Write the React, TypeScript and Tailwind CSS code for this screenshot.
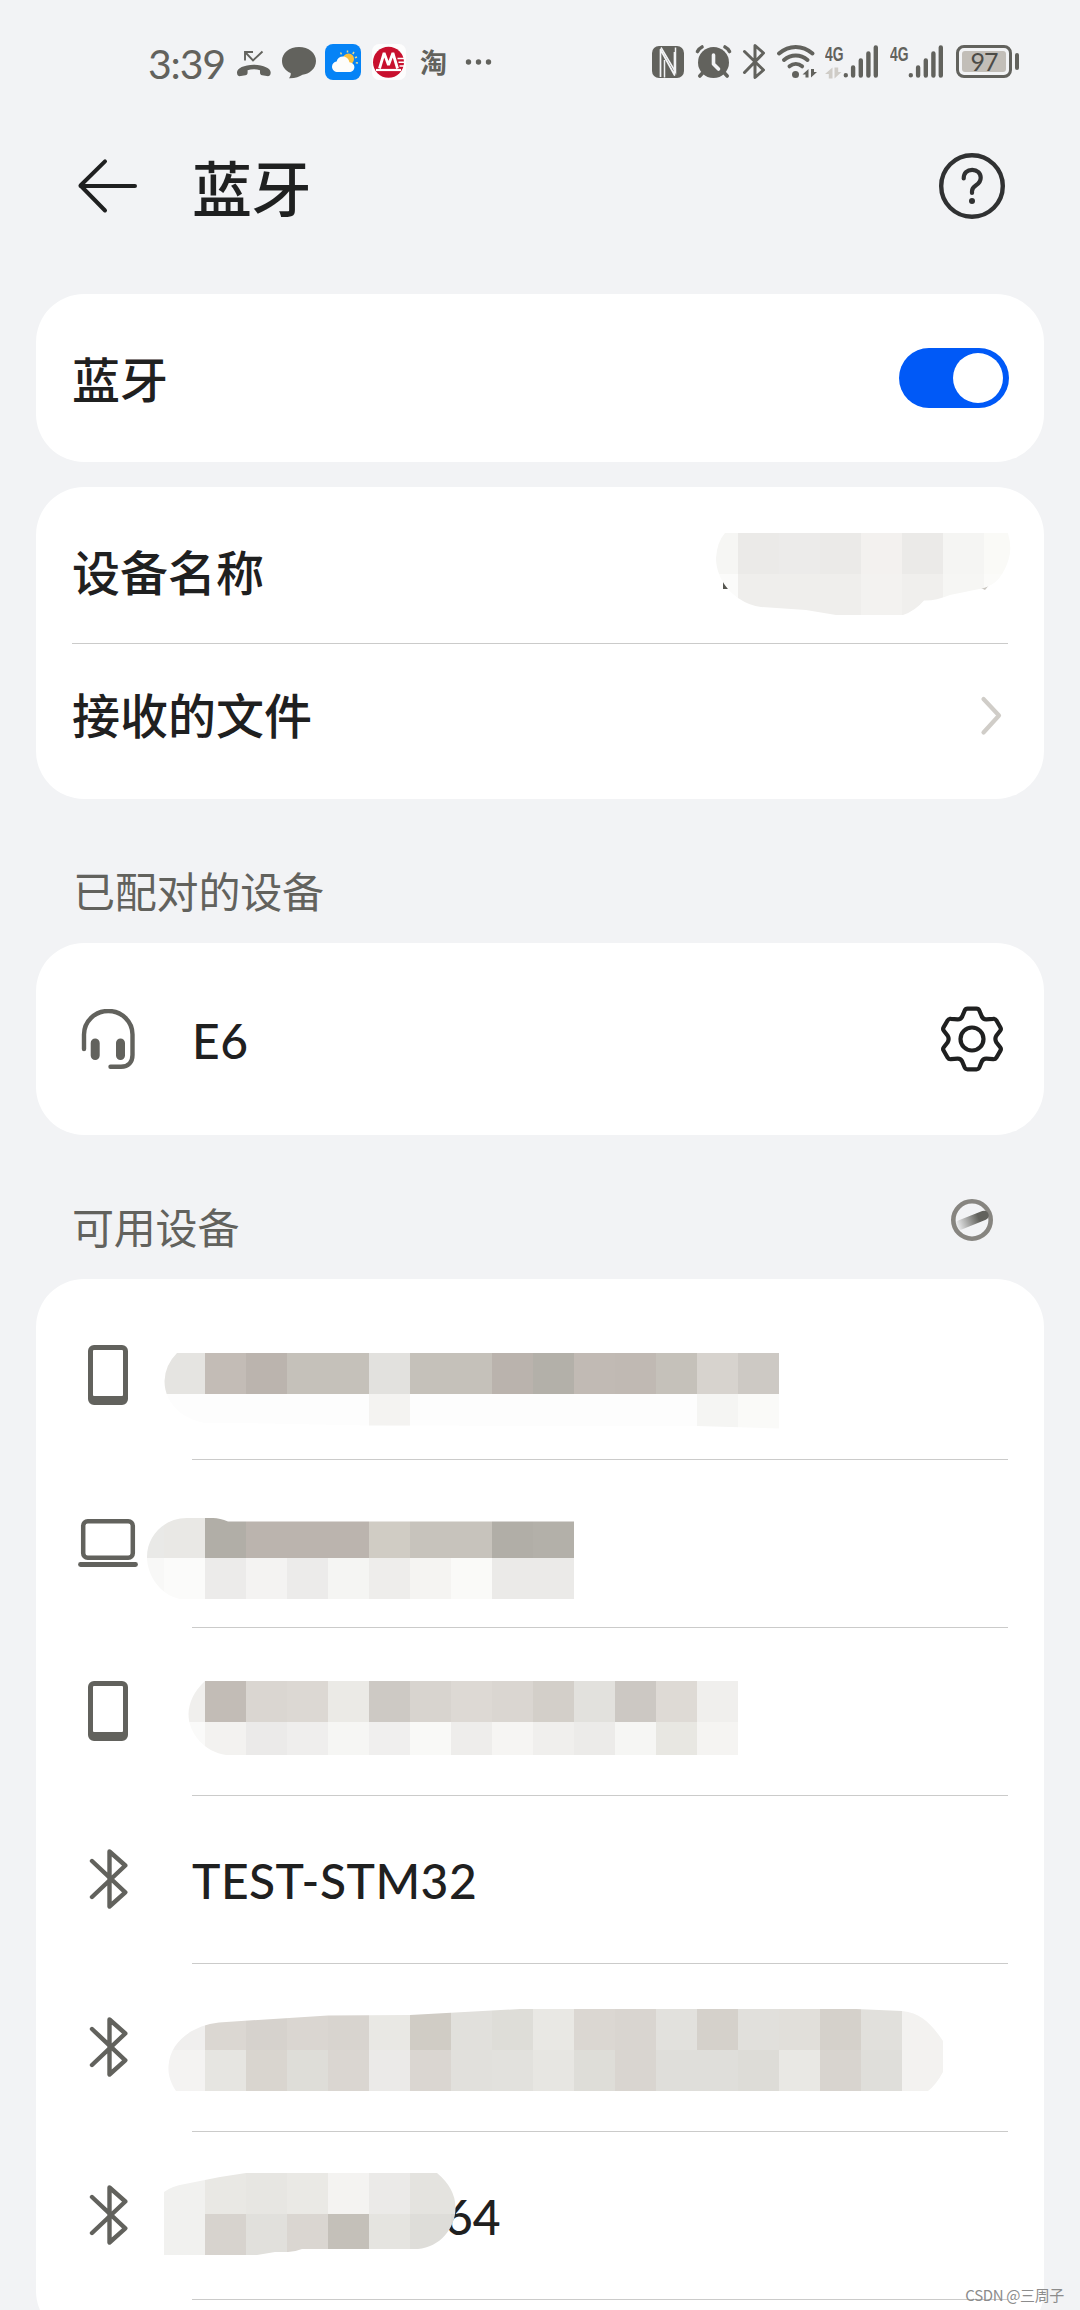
import React, { useState } from "react";

const MUTED = "#62625d";
const INK = "#1f2020";
const CELL = 41;

/* ---------- status bar ---------- */

const StatusIcon = (props: { x: number; w: number; className?: string; children: React.ReactNode }) => (
    <svg
        className={"shrink-0 " + (props.className || "")}
        width={props.w}
        height={44}
        viewBox={`${props.x} 40 ${props.w} 44`}
        fill="none"
    >
        {props.children}
    </svg>
);

// growing signal bars, starting at x
const SignalBars = ({ x }: { x: number }) => (
    <g stroke={MUTED} strokeWidth="4.4" strokeLinecap="round">
        <path d={`M${x} 75.2v.1M${x + 7.3} 67.5v8M${x + 15} 60.5v15M${x + 22.6} 53.5v22M${x + 30} 47.5v28`} />
    </g>
);

const NetworkLabel = () => (
    <div className="mt-[2px] h-[22px] origin-left scale-x-[0.66] whitespace-nowrap font-['Liberation_Sans',sans-serif] text-[21px] font-bold leading-[23px] text-[#62625d]">
        4G
    </div>
);

const StatusBar = () => (
    <div className="flex h-[124px] w-full items-start pt-[40px] pl-[148px]">
        <div className="h-[44px] w-[85px] text-[41px] leading-[47px] tracking-[-1.2px] text-[#62625d]">3:39</div>
        {/* missed call */}
        <StatusIcon x={235} w={38} className="ml-[2px]">
            <path
                d="M237 72.500c0-4 7-7.700 16.800-7.700s16.900 3.700 16.900 7.700c0 3-1.500 4-4 3.600l-4.500-.8c-1.700-.4-2.200-1.300-2.200-2.800v-2.300c-3.800-1.200-8.600-1.200-12.400 0v2.300c0 1.500-.5 2.400-2.200 2.800l-4.500.8c-2.500.4-3.900-.6-3.900-3.600z"
                fill={MUTED}
            />
            <path d="M245 60.500V52h8M245.500 52.500l7.500 8L262.500 51.500" stroke={MUTED} strokeWidth="1.900" />
        </StatusIcon>
        {/* message */}
        <StatusIcon x={281} w={36} className="ml-[8px]">
            <path
                d="M299 47c9.600 0 17 6 17 14s-7 13-13.500 13.800c-3 2-7.500 3.700-13.500 3.500 1.300-1.600 2-3.600 1.700-5.300C285.500 71 282 66.500 282 61c0-8 7.400-14 17-14z"
                fill={MUTED}
            />
        </StatusIcon>
        {/* weather */}
        <StatusIcon x={325} w={36} className="ml-[8px]">
            <rect x="325" y="44" width="36" height="36" rx="8" fill="#0583f6" />
            <path
                d="M347.500 50.500v2M354 52l-1.200 2M340.500 52.500l1 1.800M357 57l-2 .8M358 63l-2.200-.2"
                stroke="#e8d98c"
                strokeWidth="1.500"
            />
            <circle cx="348.500" cy="59" r="5.500" fill="#fac03d" />
            <path
                d="M338 72c-3.500 0-6-2.300-6-5.300 0-2.700 2-4.900 4.600-5.200.9-3 3.300-4.900 6.200-4.900 3.500 0 6 2.300 6.600 5.600 2.900.2 5 2.100 5 4.800 0 3-2.300 5-5.400 5z"
                fill="#fdfdfb"
            />
        </StatusIcon>
        {/* bank */}
        <StatusIcon x={371} w={36} className="ml-[10px]">
            <rect x="372" y="44" width="34" height="36" rx="7" fill="#fdfdfd" />
            <circle cx="388.500" cy="62.300" r="15.500" fill="#c8102e" />
            <path d="M379.500 68.500l4.600-15.500 4.400 12 4.400-12 4.600 15.500" stroke="#fff" strokeWidth="2.800" strokeLinejoin="bevel" />
            <path d="M376 70h25" stroke="#fff" strokeWidth="2.200" />
            <path d="M397.500 58.500h7M398.500 62.300h7M399.500 66h6" stroke="#fff" strokeWidth="1.400" />
        </StatusIcon>
        <div className="ml-[13px] h-[44px] w-[27px] text-[27px] font-bold leading-[45px] text-[#62625d]">淘</div>
        <StatusIcon x={465} w={32} className="ml-[18px]">
            <g fill={MUTED}>
                <circle cx="468.500" cy="62" r="2.700" />
                <circle cx="478.500" cy="62" r="2.700" />
                <circle cx="488.500" cy="62" r="2.700" />
            </g>
        </StatusIcon>

        {/* nfc */}
        <StatusIcon x={652} w={32} className="ml-[155px]">
            <rect x="652" y="46" width="32" height="32" rx="7" fill={MUTED} />
            <path d="M660.500 77V49.500L674.500 75V52" stroke="#f2f3f5" strokeWidth="1.700" strokeLinejoin="round" />
            <path d="M661 47.500L675.500 72V47.500M664.500 77.500V60" stroke="#f2f3f5" strokeWidth="1.500" />
        </StatusIcon>
        {/* alarm */}
        <StatusIcon x={695} w={37} className="ml-[11px]">
            <circle cx="713.500" cy="62.500" r="15.500" fill={MUTED} />
            <path d="M713.500 55v9l5 5" stroke="#f2f3f5" strokeWidth="3.600" strokeLinecap="round" strokeLinejoin="round" />
            <path
                d="M697.500 51.500q1.500-3 4.500-4.500M729.500 51.500q-1.500-3-4.500-4.500M703 72.500l-3.200 3.500M724 72.500l3.200 3.500"
                stroke={MUTED}
                strokeWidth="3.600"
                strokeLinecap="round"
            />
        </StatusIcon>
        {/* bluetooth */}
        <StatusIcon x={741} w={26} className="ml-[9px]">
            <path
                d="M744.500 51.500l19 18.500-8.500 7.500V45.500l8.500 7.500-19 19.500"
                stroke={MUTED}
                strokeWidth="3"
                strokeLinecap="round"
                strokeLinejoin="round"
            />
        </StatusIcon>
        {/* wifi */}
        <StatusIcon x={776} w={41} className="ml-[9px]">
            <g stroke={MUTED} strokeWidth="4" strokeLinecap="round">
                <path d="M779 53.500c10-8.800 23.500-8.800 33.500 0" />
                <path d="M784 60c7-6 16.500-6 23.500 0" />
                <path d="M789.500 66.300c3.800-3 8.800-3 12.600 0" />
            </g>
            <circle cx="795.500" cy="74.500" r="3.500" fill={MUTED} />
            <path d="M808.500 77.500v-8.500l-6 5.500h3v3zM811 69v8.500l6-5.500h-3v-3z" fill={MUTED} />
        </StatusIcon>
        <div className="ml-[8px] flex h-[44px] w-[19px] flex-col">
            <NetworkLabel />
            <svg width="17" height="12" viewBox="0 0 17 12" className="mt-[3px]">
                <path d="M7.500 11.500V.5L0 7h3.800v4.500zM9.500.5v11L16.500 5h-3.300V.5z" fill="#cfccc7" />
            </svg>
        </div>
        <StatusIcon x={843} w={37} className="-ml-px">
            <SignalBars x={845.8} />
        </StatusIcon>
        <div className="ml-[10px] flex h-[44px] w-[19px] flex-col">
            <NetworkLabel />
        </div>
        <StatusIcon x={908} w={37} className="-ml-px">
            <SignalBars x={910.8} />
        </StatusIcon>
        {/* battery */}
        <div className="ml-[11px] mt-[5px] flex items-center gap-[3px]">
            <div className="flex h-[33px] w-[56px] items-center justify-center rounded-[8px] border-[3.500px] border-[#62625d]">
                <div className="flex h-[21px] w-[44px] items-center justify-center rounded-[3px] bg-[#c2beb8] text-[25px] leading-none tracking-[-1px] text-[#4b4b47]">
                    97
                </div>
            </div>
            <div className="h-[17px] w-[4px] rounded-full bg-[#62625d]" />
        </div>
    </div>
);

/* ---------- icons ---------- */

const PhoneIcon = () => (
    <svg width="60" height="60" viewBox="0 0 60 60">
        <path
            fillRule="evenodd"
            d="M16 0h28a6 6 0 0 1 6 6v48a6 6 0 0 1-6 6H16a6 6 0 0 1-6-6V6a6 6 0 0 1 6-6zm0 5a1 1 0 0 0-1 1v44a1 1 0 0 0 1 1h28a1 1 0 0 0 1-1V6a1 1 0 0 0-1-1z"
            fill={MUTED}
        />
    </svg>
);

const LaptopIcon = () => (
    <svg width="60" height="60" viewBox="0 0 60 60" fill="none">
        <rect x="5.200" y="8.200" width="49.600" height="36.600" rx="4.500" stroke={MUTED} strokeWidth="4.500" />
        <path d="M2.500 51.500h55" stroke={MUTED} strokeWidth="4.800" strokeLinecap="round" />
    </svg>
);

const BluetoothIcon = () => (
    <svg width="60" height="60" viewBox="0 0 60 60" fill="none">
        <path
            d="M14 12l33.300 31.300L31.500 57.500V2.500L47.300 16.500 14 48"
            stroke={MUTED}
            strokeWidth="4.400"
            strokeLinecap="round"
            strokeLinejoin="round"
        />
    </svg>
);

const HeadsetIcon = () => (
    <svg width="60" height="60" viewBox="0 0 60 60" fill="none">
        <path
            d="M6 40V25.500a24 23.300 0 0 1 48.500 0V46c0 7-4 11.700-11.500 11.700H32.500"
            stroke={MUTED}
            strokeWidth="4.400"
            strokeLinecap="round"
        />
        <path d="M17.200 34v12.500M42.500 34v12.500" stroke={MUTED} strokeWidth="9" strokeLinecap="round" />
    </svg>
);

const GearIcon = () => (
    <svg width="66" height="66" viewBox="-33 -33 66 66" fill="none" stroke={INK} strokeWidth="4.200" strokeLinejoin="round">
        <circle r="11.500" />
        <path d="M-4.500-30.300H4.500Q6.500-30.300 7.300-28.500L9.800-22.500Q11.200-19.500 14.500-19.700L21-20.200Q23.200-20.500 24.300-18.700L28.300-11.800Q29.500-9.800 28.200-8.200L24.300-3.200Q22.500 0 24.300 3.200L28.200 8.200Q29.500 9.800 28.300 11.800L24.300 18.700Q23.200 20.500 21 20.200L14.500 19.700Q11.200 19.500 9.800 22.500L7.300 28.500Q6.500 30.300 4.500 30.300H-4.500Q-6.500 30.300-7.300 28.500L-9.800 22.500Q-11.200 19.500-14.500 19.700L-21 20.200Q-23.200 20.500-24.300 18.700L-28.300 11.800Q-29.500 9.800-28.200 8.200L-24.300 3.200Q-22.500 0-24.300-3.200L-28.200-8.200Q-29.500-9.800-28.300-11.800L-24.300-18.700Q-23.200-20.500-21-20.200L-14.500-19.700Q-11.200-19.500-9.800-22.500L-7.300-28.500Q-6.500-30.300-4.500-30.300Z" />
    </svg>
);

const Spinner = () => (
    <svg width="44" height="44" viewBox="-22 -22 44 44" fill="none">
        <defs>
            <linearGradient id="tail" gradientUnits="userSpaceOnUse" x1="-16" y1="6" x2="14" y2="-5">
                <stop offset="0" stopColor="#62625d" stopOpacity="0" />
                <stop offset="0.750" stopColor="#62625d" />
            </linearGradient>
        </defs>
        <circle r="18.700" stroke="#878580" strokeWidth="4.600" />
        <path d="M-12 5L12-4.600" stroke="url(#tail)" strokeWidth="9.500" strokeLinecap="round" />
    </svg>
);

/* ---------- blurred out names ---------- */

type MosaicProps = {
    id: string;
    x: number;
    y: number;
    w: number;
    h: number;
    startX: number;
    startY: number;
    rows: string[];
    clip: string;
    className?: string;
    children?: React.ReactNode;
};

const Mosaic = (props: MosaicProps) => {
    const { id, x, y, w, h, startX, startY, rows, clip } = props;
    return (
        <svg width={w} height={h} viewBox={`${x} ${y} ${w} ${h}`} className={"shrink-0 " + (props.className || "")}>
            <clipPath id={id}>
                <path d={clip} />
            </clipPath>
            {props.children}
            <g clipPath={`url(#${id})`} shapeRendering="crispEdges">
                {rows.map((row, r) =>
                    row.split(" ").map((c, i) => (
                        <rect
                            key={r + "-" + i}
                            x={startX + i * CELL}
                            y={startY + r * CELL}
                            width={CELL}
                            height={CELL}
                            fill={"#" + c}
                        />
                    ))
                )}
            </g>
        </svg>
    );
};

const Divider = () => <div className="h-px w-full shrink-0 bg-[#cbcbca]" />;

const DeviceRow = (props: { icon: React.ReactNode; children: React.ReactNode }) => (
    <div className="flex h-[168px] pl-[42px] pr-9">
        <div className="flex h-full w-[60px] shrink-0 items-center">{props.icon}</div>
        <div className="ml-[54px] flex min-w-0 flex-1 flex-col">
            <div className="flex h-[168px] shrink-0 items-center">{props.children}</div>
            <Divider />
        </div>
    </div>
);

const Card = (props: { className?: string; children: React.ReactNode }) => (
    <section className={"mx-9 rounded-[48px] bg-white py-3 " + (props.className || "")}>{props.children}</section>
);

const App = () => {
    const [enabled, setEnabled] = useState(true);

    return (
        <main className="relative h-[2310px] w-[1080px] overflow-hidden bg-[#f2f3f5] font-[Lato,'Noto_Sans_CJK_SC',sans-serif] text-[#1f2020]">
            <StatusBar />

            <header className="flex h-[170px] items-start pl-[76px] pr-[75px]">
                <svg width="64" height="124" viewBox="76 124 64 124" fill="none" stroke={INK} strokeWidth="4" strokeLinecap="round">
                    <path d="M80.500 186H135M105 161.300L80.500 185.500 105 210.500" strokeLinejoin="round" />
                </svg>
                <h1 className="ml-[52px] h-[124px] text-[60px] font-medium leading-[130px] tracking-[-0.5px]">蓝牙</h1>
                <svg className="ml-auto" width="66" height="124" viewBox="939 124 66 124" fill="none" stroke="#303132" strokeLinecap="round">
                    <circle cx="972" cy="186" r="30.800" strokeWidth="4.400" />
                    <path d="M963.700 178.500c0-5.500 3.600-8.700 8.500-8.700s8.500 3.400 8.500 8c0 8.500-8.700 6.500-8.700 13.500v1.700" strokeWidth="4.200" />
                    <circle cx="972" cy="201" r="3" fill="#303132" stroke="none" />
                </svg>
            </header>

            <Card>
                <div className="flex h-[144px] items-center pl-9 pr-[35px]">
                    <span className="mt-[4px] text-[48px] font-medium">蓝牙</span>
                    <button
                        onClick={() => setEnabled(!enabled)}
                        className={"ml-auto flex h-[60px] w-[110px] items-center rounded-full px-[6px] " + (enabled ? "justify-end bg-[#0059f7]" : "justify-start bg-gray-300")}
                    >
                        <span className="h-[50px] w-[50px] rounded-full bg-white" />
                    </button>
                </div>
            </Card>

            <Card className="mt-[25px]">
                <div className="mx-9">
                    <div className="flex h-[144px] items-center">
                        <span className="mt-[3px] text-[48px] font-medium">设备名称</span>
                        <Mosaic
                            id="name"
                            className="-mr-1 ml-auto mt-[6px]"
                            x={714}
                            y={529}
                            w={298}
                            h={90}
                            startX={697}
                            startY={533}
                            clip="M725 533H1008Q1012 547 1009 558C1004 576 995 585 984 588L950 595Q935 601 924 600.500Q915 611 903 615H836L806 610 761 607Q750 606 738 598C722 587 716 570 716 558Q717 542 725 533Z"
                            rows={[
                                "f6f6f4 ebeae8 ecebea ebeae8 f3f1ef ebeae8 f5f5f3 fafaf7",
                                "fbfbfa efeeec efeeec efeeec f3f2f0 f0efed f6f6f4 fbfbf9",
                            ]}
                        >
                            <path d="M723 582h2l3 4v3h-5z" fill="#55554f" />
                            <path d="M981 588l9-4-5 6z" fill="#c9c6c0" />
                        </Mosaic>
                    </div>
                    <Divider />
                    <div className="flex h-[143px] items-center">
                        <span className="mt-px text-[48px] font-medium">接收的文件</span>
                        <svg className="ml-auto mr-[6px]" width="22" height="40" viewBox="0 0 22 40" fill="none">
                            <path d="M3.500 3L19 19.500 3.500 36.500" stroke="#d0cdc8" strokeWidth="4.200" strokeLinecap="round" strokeLinejoin="round" />
                        </svg>
                    </div>
                </div>
            </Card>

            <div className="flex h-[144px] items-center pl-[73px] text-[42px] tracking-[-0.2px] text-[#62625d]">
                <span className="mt-[43px]">已配对的设备</span>
            </div>

            <Card>
                <div className="flex h-[168px] items-center pl-[42px] pr-[39px]">
                    <HeadsetIcon />
                    <span className="ml-[54px] mt-[4px] text-[48px] font-medium tracking-[0.6px]">E6</span>
                    <div className="ml-auto">
                        <GearIcon />
                    </div>
                </div>
            </Card>

            <div className="flex h-[144px] items-center justify-between pl-[72px] pr-[86px] text-[42px] tracking-[-0.2px] text-[#62625d]">
                <span className="mt-[43px]">可用设备</span>
                <div className="mt-[25px]">
                    <Spinner />
                </div>
            </div>

            <Card className="pb-0">
                <DeviceRow icon={<PhoneIcon />}>
                    <Mosaic
                        id="d1"
                        className="-ml-[28px] mt-[33px]"
                        x={164}
                        y={1353}
                        w={615}
                        h={77}
                        startX={164}
                        startY={1353}
                        clip="M177 1353H779V1428.500L697 1426 369 1425.500 246 1423H205C185 1420 164.500 1405 164.500 1381Q165 1365 177 1353Z"
                        rows={[
                            "e5e4e1 c3bcb6 bbb4ae c5c1ba c5c1ba e2e1de c5c1ba c5c1ba bab3ad b3b0a9 c1bab4 c0b9b3 c5c1ba d7d3ce cdc9c4",
                            "fdfdfd fdfdfd fdfdfd fdfdfd fdfdfd f4f3f1 fdfdfd fdfdfd fdfdfd fdfdfd fdfdfd fdfdfd fdfdfd f5f5f3 fafaf8",
                        ]}
                    />
                </DeviceRow>

                <DeviceRow icon={<LaptopIcon />}>
                    <Mosaic
                        id="d2"
                        className="-ml-[46px] mt-[31px]"
                        x={146}
                        y={1517}
                        w={430}
                        h={83}
                        startX={123}
                        startY={1517}
                        clip="M187 1518H213Q220 1518 228 1521.500H574V1599H180C160 1595 147 1575 147 1557C147 1535 165 1518 187 1518Z"
                        rows={[
                            "e9e9e7 e9e8e5 b1aea7 bbb4ae bbb4ae bbb4ae d0ccc4 c7c3bc c7c3bc b1aea7 b3b0a9",
                            "f8f8f7 fbfbfa ecebea f4f3f2 ecebea f5f5f3 eeedeb f5f4f2 fafaf8 ebeae8 ebeae8",
                        ]}
                    />
                </DeviceRow>

                <DeviceRow icon={<PhoneIcon />}>
                    <Mosaic
                        id="d3"
                        className="-ml-[5px] mt-[14px]"
                        x={187}
                        y={1681}
                        w={551}
                        h={74}
                        startX={164}
                        startY={1681}
                        clip="M205 1681H738V1755H226C205 1752 188.500 1734 188.500 1714Q189 1696 205 1681Z"
                        rows={[
                            "f0efed c2bcb6 dad6d1 dcd8d3 ebeae6 cdc9c4 d8d4cf ddd9d4 dad6d1 d3cfc9 e2e1dd ccc8c3 dedad5 f0efed",
                            "fafaf9 f3f2f0 ebeae9 efeeed f6f6f4 f0efee f9f9f7 eeedeb f6f5f3 f0efed ecebe9 f6f6f4 e8e7e2 f5f4f2",
                        ]}
                    />
                </DeviceRow>

                <DeviceRow icon={<BluetoothIcon />}>
                    <span className="mt-[3px] text-[48px] font-medium tracking-[0.45px]">TEST-STM32</span>
                </DeviceRow>

                <DeviceRow icon={<BluetoothIcon />}>
                    <Mosaic
                        id="d5"
                        className="-ml-[24px] mt-[6px]"
                        x={168}
                        y={2008}
                        w={776}
                        h={84}
                        startX={164}
                        startY={2009}
                        clip="M168.500 2066C170 2043 190 2026 219 2022.500L328 2015.500 410 2015 520 2009H856L902 2011C922 2013 932 2025 943 2041V2072Q936 2085 928 2091H176C170 2082 168 2074 168.500 2066Z"
                        rows={[
                            "f0efee dbd7d2 d6d2cd dad6d1 d8d4cf e9e8e4 d0ccc5 e1e0dc deddd8 e9e8e4 dbd7d2 d9d5d0 e2e1dd d5d1cb e1e0dc e1dfda d5d1cb e1e0dc f3f2f0",
                            "f4f3f2 e6e5e1 d9d5cf deddd8 dad6d1 ebeae8 dad6d1 e1e0dc e2e1dd e7e6e2 deddd8 d9d5d0 dfdeda dfdeda dddcd7 e9e8e4 d8d4cf dfdeda f3f2f0",
                        ]}
                    />
                </DeviceRow>

                <DeviceRow icon={<BluetoothIcon />}>
                    <Mosaic
                        id="d6"
                        className="relative z-10 -ml-[28px] -mt-[2px]"
                        x={164}
                        y={2172}
                        w={293}
                        h={84}
                        startX={164}
                        startY={2173}
                        clip="M164 2192Q172 2186 185 2184L220 2177 246 2173H437Q455 2188 455.500 2207C456 2228 440 2247 418 2249H302Q296 2251.500 288 2252H275L257 2255H164Z"
                        rows={[
                            "f1f1ef e9e8e4 e7e6e2 eae9e5 f4f3f1 ebeae8 e4e3df e4e3df",
                            "f1f1ef d7d3ce e1e0dc dad6d1 c4c0b9 e5e4e0 deddd9 dad8d4",
                        ]}
                    />
                    <span className="-ml-[12px] mt-[3px] text-[48px] font-medium">64</span>
                </DeviceRow>
                <div className="h-10" />
            </Card>

            {/* watermark lies over the list */}
            <div className="absolute bottom-[5px] right-[16px] whitespace-nowrap font-['Noto_Sans_CJK_SC',sans-serif] text-[15px] leading-[20px] tracking-[-0.35px] text-[#8c8c8c]">
                CSDN @三周子
            </div>
        </main>
    );
};

export default App;
